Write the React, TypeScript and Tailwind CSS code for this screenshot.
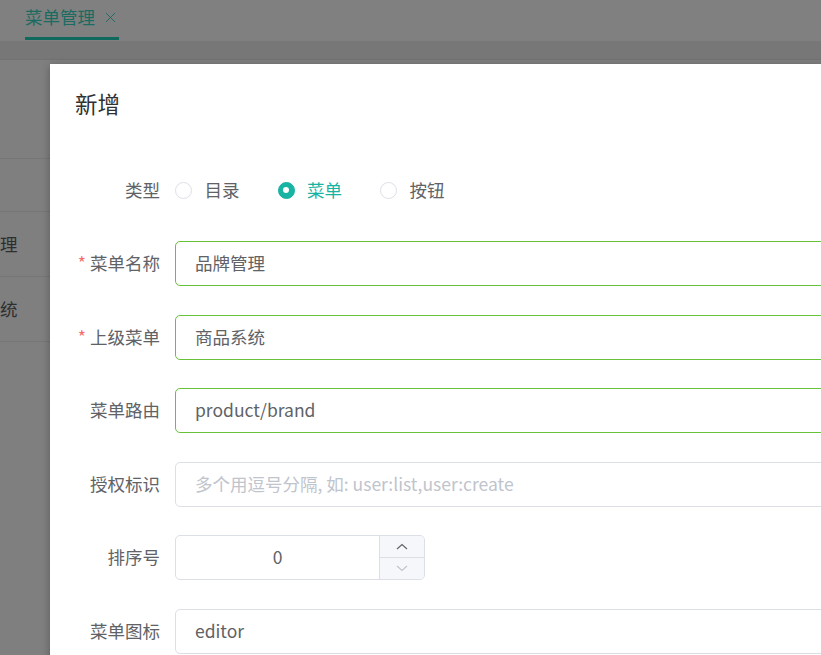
import { X } from "lucide-react"

const font = { fontFamily: '"Noto Sans CJK SC", "Noto Sans", sans-serif' }

function Label({ text, required }: { text: string; required?: boolean }) {
  return (
    <div className="w-[100px] shrink-0 pr-[15px] text-right text-[17.5px] text-[#606266]">
      {required && <span className="mr-[4px] text-[#f56c6c]">*</span>}
      {text}
    </div>
  )
}

function Radio({ label, checked }: { label: string; checked?: boolean }) {
  return (
    <div className="mr-[38px] flex items-center">
      {checked ? (
        <span className="flex h-[17px] w-[17px] items-center justify-center rounded-full border border-[#17b3a3] bg-[#17b3a3]">
          <span className="h-[6px] w-[6px] rounded-full bg-white" />
        </span>
      ) : (
        <span className="h-[17px] w-[17px] rounded-full border border-[#dcdfe6] bg-white" />
      )}
      <span className={`pl-[12.5px] text-[17.5px] ${checked ? "text-[#17b3a3]" : "text-[#606266]"}`}>
        {label}
      </span>
    </div>
  )
}

function Field({
  label,
  value,
  placeholder,
  required,
  valid,
}: {
  label: string
  value?: string
  placeholder?: string
  required?: boolean
  valid?: boolean
}) {
  return (
    <div className="flex h-[45px] items-center">
      <Label text={label} required={required} />
      <div
        className={`flex h-[45px] w-[720px] items-center rounded-[5px] border px-[19px] text-[17.5px] ${
          valid ? "border-[#67c23a]" : "border-[#dcdfe6]"
        }`}
      >
        {value ? (
          <span className="text-[#606266]">{value}</span>
        ) : (
          <span className="text-[#c0c4cc]">{placeholder}</span>
        )}
      </div>
    </div>
  )
}

function Arrow({ up }: { up?: boolean }) {
  return (
    <svg width="12" height="7" viewBox="0 0 12 7" fill="none" stroke="currentColor" strokeWidth="1.1">
      {up ? <polyline points="1,6 6,1.5 11,6" /> : <polyline points="1,1 6,5.5 11,1" />}
    </svg>
  )
}

export default function App() {
  return (
    <div className="relative h-[655px] w-[821px] overflow-hidden bg-[#7f7f7f]" style={font}>
      {/* dimmed page behind the dialog */}
      <div className="flex h-[41px] items-end bg-[#808080] pl-[25px]">
        <div className="flex h-full flex-col justify-between">
          <div className="flex items-center gap-[7px] pt-[4px] text-[17.5px] text-[#1b6b61]">
            <span>菜单管理</span>
            <X className="h-[17px] w-[17px]" strokeWidth={1.3} />
          </div>
          <div className="mb-[1px] h-[3px] w-[94px] bg-[#10695d]" />
        </div>
      </div>
      <div className="h-[19px] border-b border-[#727272] bg-[#767776]" />
      <div className="text-[17.5px] text-[#2e2e2e]">
        <div className="h-[99px] border-b border-[#767676]" />
        <div className="h-[53px] border-b border-[#767676]" />
        <div className="flex h-[65px] items-center border-b border-[#767676]">
          <span>理</span>
        </div>
        <div className="flex h-[65px] items-center border-b border-[#767676]">
          <span>统</span>
        </div>
      </div>

      {/* dialog */}
      <div className="absolute left-[50px] top-[64px] h-[700px] w-[1000px] bg-white shadow-[0_2px_8px_rgba(0,0,0,0.3)]">
        <div className="px-[25px] pt-[24px] text-[22.5px] leading-[30px] text-[#303133]">新增</div>
        <div className="flex flex-col gap-[28.5px] px-[25px] pt-[49.5px]">
          <div className="flex h-[45px] items-center">
            <Label text="类型" />
            <Radio label="目录" />
            <Radio label="菜单" checked />
            <Radio label="按钮" />
          </div>
          <Field label="菜单名称" value="品牌管理" required valid />
          <Field label="上级菜单" value="商品系统" required valid />
          <Field label="菜单路由" value="product/brand" valid />
          <Field label="授权标识" placeholder="多个用逗号分隔, 如: user:list,user:create" />
          <div className="flex h-[45px] items-center">
            <Label text="排序号" />
            <div className="flex h-[45px] w-[250px] rounded-[5px] border border-[#dcdfe6]">
              <div className="flex flex-1 items-center justify-center text-[17.5px] text-[#606266]">0</div>
              <div className="flex w-[45px] flex-col rounded-r-[5px] border-l border-[#dcdfe6] bg-[#f5f7fa]">
                <div className="flex flex-1 items-center justify-center border-b border-[#dcdfe6] text-[#606266]">
                  <Arrow up />
                </div>
                <div className="flex flex-1 items-center justify-center text-[#c0c4cc]">
                  <Arrow />
                </div>
              </div>
            </div>
          </div>
          <Field label="菜单图标" value="editor" />
        </div>
      </div>
    </div>
  )
}
